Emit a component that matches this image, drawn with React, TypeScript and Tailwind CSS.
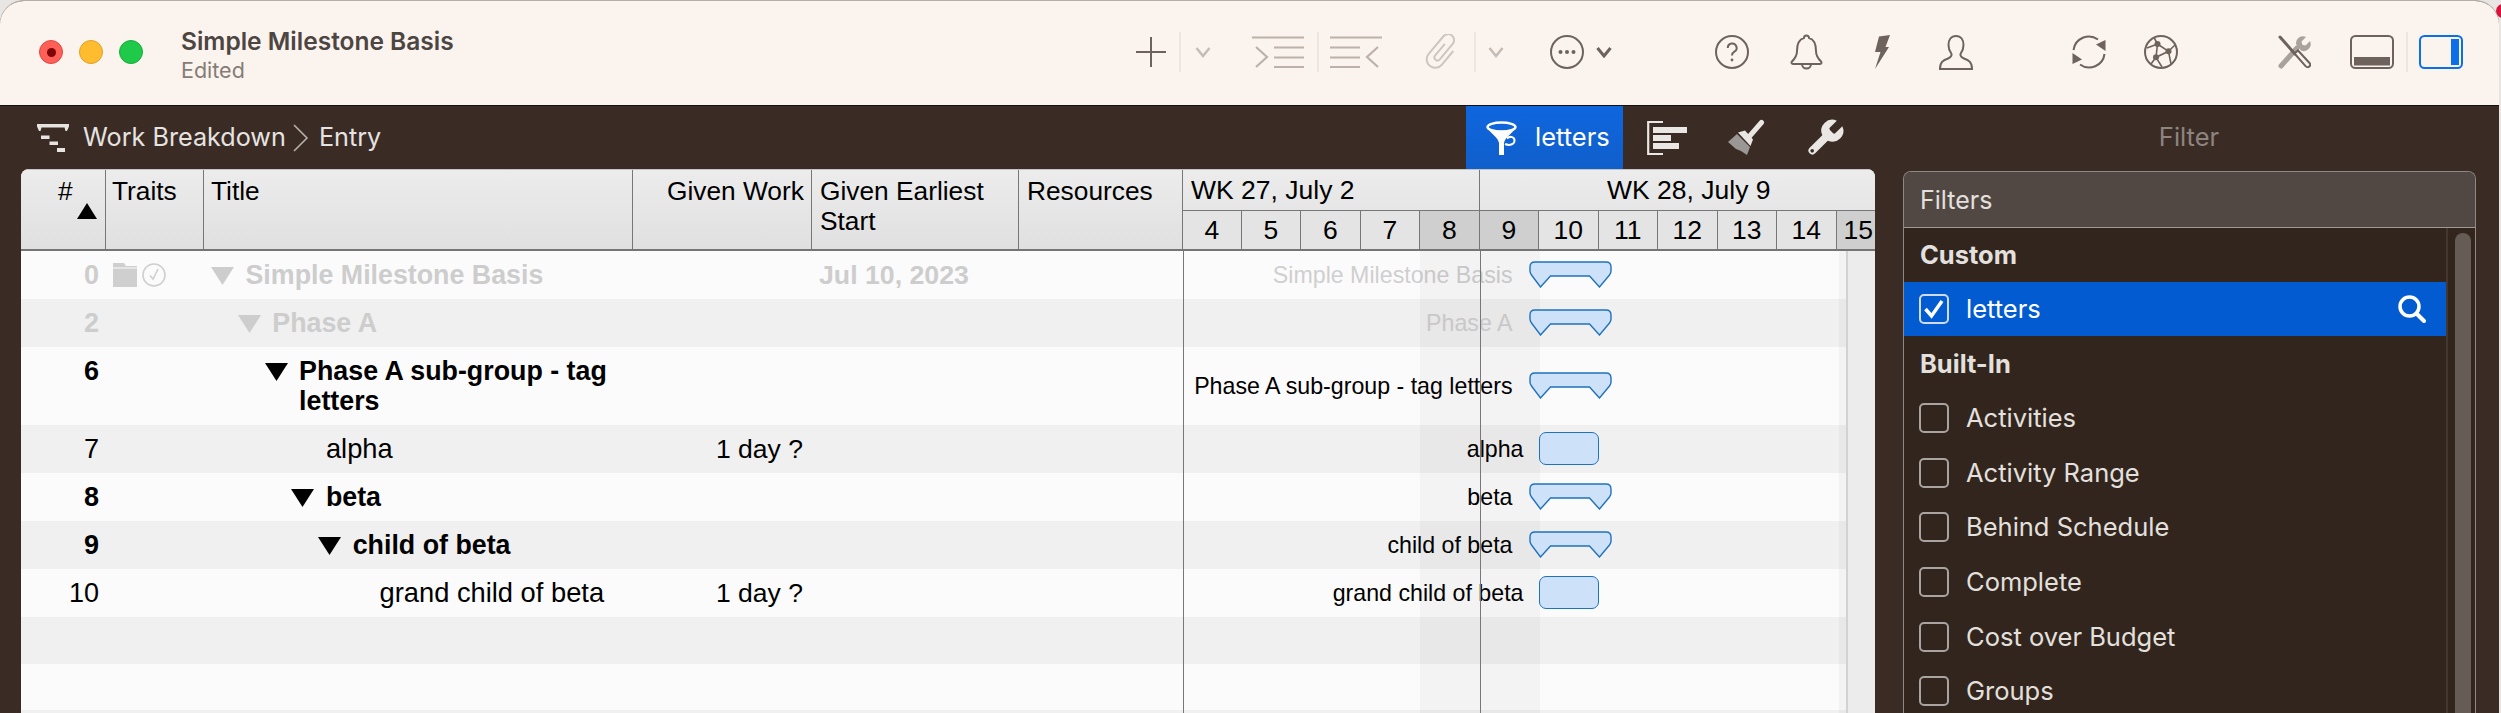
import React from "react";

const mac = "font-['Inter',sans-serif]";
const helv = "font-['Liberation_Sans',sans-serif]";

const INK = "#6e635c";
const OFF = "#bdb1a9";

function Divider() {
  return <div className="w-[2px] h-[40px] bg-[#ece6e1] shrink-0" />;
}

function Chevron({ color, width = 2.5 }: { color: string; width?: number }) {
  return (
    <svg width="16" height="12" viewBox="0 0 16 12" fill="none" stroke={color} strokeWidth={width} className="shrink-0">
      <polyline points="1.5,2 8,10 14.5,2" />
    </svg>
  );
}

function Plus() {
  return (
    <svg width="30" height="30" viewBox="0 0 30 30" stroke={INK} strokeWidth="2" className="shrink-0">
      <path d="M15 0V30M0 15H30" />
    </svg>
  );
}

function Indent({ flip }: { flip?: boolean }) {
  return (
    <svg width="52" height="32" viewBox="0 0 52 32" fill="none" stroke={OFF} strokeWidth="2.2" className="shrink-0">
      {flip ? (
        <path d="M0 1.5H52M0 11.5H30M0 21.5H30M0 31H30M48 11L37 21L48 31" />
      ) : (
        <path d="M0 1.5H52M22 11.5H52M22 21.5H52M22 31H52M4 11L15 21L4 31" />
      )}
    </svg>
  );
}

function Clip() {
  return (
    <svg width="38" height="36" viewBox="-3 -2 38 36" fill="none" stroke="#cdc5bf" strokeWidth="2" className="shrink-0">
      <g transform="rotate(40 16 16)">
        <path d="M24 8V26a8.500 8.500 0 0 1-17 0V3a6 6 0 0 1 12 0V23a3 3 0 0 1-6 0V8" />
      </g>
    </svg>
  );
}

function Dots() {
  return (
    <svg width="34" height="34" viewBox="0 0 34 34" fill={INK} className="shrink-0">
      <circle cx="17" cy="17" r="16" fill="none" stroke={INK} strokeWidth="2" />
      <circle cx="10.5" cy="17" r="2" />
      <circle cx="17" cy="17" r="2" />
      <circle cx="23.5" cy="17" r="2" />
    </svg>
  );
}

function Help() {
  return (
    <svg width="34" height="34" viewBox="0 0 34 34" fill="none" stroke={INK} strokeWidth="2" className="shrink-0">
      <circle cx="17" cy="17" r="16" />
      <path d="M12.8 13a4.4 4.4 0 1 1 6.6 3.7c-1.7 1-2.4 2-2.4 3.8" />
      <circle cx="17" cy="25" r="1.4" fill={INK} stroke="none" />
    </svg>
  );
}

function Bell() {
  return (
    <svg width="33" height="36" viewBox="0 0 33 36" fill="none" stroke={INK} strokeWidth="2" className="shrink-0">
      <path d="M16.5 1.5a2.6 2.6 0 0 0-2.6 2.6C8.5 5.5 7 10.5 7 17c0 5-2 7.5-5 10.5-1 1.2-.5 2.5 1 2.5h27c1.5 0 2-1.3 1-2.5-3-3-5-5.500-5-10.500 0-6.500-1.500-11.500-6.900-12.900a2.600 2.600 0 0 0-2.600-2.600Z" />
      <path d="M12 30a4.500 4.500 0 0 0 9 0" />
    </svg>
  );
}

function Bolt() {
  return (
    <svg width="16" height="34" viewBox="0 0 16 34" fill={INK} className="shrink-0">
      <path d="M5 1.500 16 0 11.500 12 15 12 1 34 6.500 17 1 17Z" />
    </svg>
  );
}

function Person() {
  return (
    <svg width="34" height="35" viewBox="0 0 34 35" fill="none" stroke={INK} strokeWidth="2" className="shrink-0">
      <path d="M17 1c-5 0-7.500 4-7.500 9 0 4 1.500 7 3 9 .5 2-.5 3-3.500 4.500C4 25.500 1 27 1 34h32c0-7-3-8.500-8-10.500-3-1.500-4-2.500-3.500-4.500 1.500-2 3-5 3-9 0-5-2.500-9-7.500-9Z" />
    </svg>
  );
}

function Sync() {
  return (
    <svg width="34" height="34" viewBox="0 0 34 34" fill="none" stroke={INK} strokeWidth="2" className="shrink-0">
      <path d="M1.500 15A15.500 15.500 0 0 1 26 4.500" />
      <path d="M32.500 19A15.500 15.500 0 0 1 8 29.500" />
      <path d="M33.500 16V5L24 9.500Z" fill={INK} stroke="none" />
      <path d="M.5 18V29L10 24.500Z" fill={INK} stroke="none" />
    </svg>
  );
}

function Network() {
  return (
    <svg width="34" height="34" viewBox="0 0 34 34" fill="none" stroke={INK} strokeWidth="1.6" className="shrink-0">
      <circle cx="17" cy="17" r="16" strokeWidth="2" />
      <path d="M13.500 9 24.500 16.300 12 22.300ZM13.500 9 10 2.500M13.500 9 3 13M24.500 16.300 31 10M24.500 16.300 27 29M12 22.300 7 29M12 22.300 18 32" />
      <circle cx="13.500" cy="9" r="3" fill={INK} stroke="none" />
      <circle cx="24.500" cy="16.300" r="3" fill={INK} stroke="none" />
      <circle cx="12" cy="22.300" r="3" fill={INK} stroke="none" />
    </svg>
  );
}

function Tools() {
  return (
    <svg width="33" height="34" viewBox="0 0 33 34" fill="none" className="shrink-0">
      <path d="M3 31 19 13" stroke="#a9a19b" strokeWidth="5" strokeLinecap="round" />
      <path d="M18 9a7 7 0 0 1 10-7l-4.500 4.500.8 3.200 3.200.8L32 6a7 7 0 0 1-9 9.500Z" fill="#a9a19b" />
      <path d="M2 2 17 19" stroke={INK} strokeWidth="3" strokeLinecap="round" />
      <path d="M16.500 18.500 20 15.500 31.500 28a2.400 2.400 0 0 1-3.700 3.300Z" fill="#fbf3ee" stroke={INK} strokeWidth="2" />
    </svg>
  );
}

function PanelBottom() {
  return (
    <svg width="44" height="34" viewBox="0 0 44 34" className="shrink-0">
      <rect x="1" y="1" width="42" height="32" rx="4.500" fill="none" stroke={INK} strokeWidth="2" />
      <rect x="4" y="22" width="36" height="8.500" fill={INK} />
    </svg>
  );
}

function PanelRight() {
  return (
    <svg width="44" height="34" viewBox="0 0 44 34" className="shrink-0">
      <rect x="1" y="1" width="42" height="32" rx="4.500" fill="none" stroke="#0a6fe8" strokeWidth="2" />
      <rect x="32" y="4" width="8" height="26" fill="#0a6fe8" />
    </svg>
  );
}

function Funnel() {
  return (
    <svg width="32" height="34" viewBox="0 0 32 34" className="shrink-0">
      <path d="M1.500 6C4 13 11.500 15 13 22V34H18V22C19.500 15 27 13 29.500 6Z" fill="#fff" />
      <ellipse cx="15.500" cy="6" rx="14" ry="4.500" fill="#1065da" stroke="#fff" strokeWidth="2.400" />
      <path d="M21 17.500c3-3 8-1.500 7.500 2.500-.5 3.500-5 5-9.500 3" fill="none" stroke="#fff" strokeWidth="2" />
    </svg>
  );
}

function GanttIcon() {
  return (
    <svg width="40" height="34" viewBox="0 0 40 34" fill="#e9e6e4" className="shrink-0">
      <path d="M16 1H1.200V33H16" fill="none" stroke="#e9e6e4" strokeWidth="2.200" />
      <rect x="6" y="6" width="34" height="6" />
      <rect x="6" y="14" width="18" height="6" />
      <rect x="6" y="22" width="26" height="6" />
    </svg>
  );
}

function Brush() {
  return (
    <svg width="37" height="37" viewBox="0 0 37 37" className="shrink-0">
      <path d="M0 23 9 15 22 28 19 36 13 32 8 30Z" fill="#9b9794" />
      <path d="M33.500 3.500 20 19" stroke="#e9e6e4" strokeWidth="5" strokeLinecap="round" />
      <path d="M10 13.500 17 11.500 25 20.500 22.500 27Z" fill="#e9e6e4" />
    </svg>
  );
}

function WrenchIcon() {
  return (
    <svg width="44" height="44" viewBox="0 0 24 24" className="shrink-0">
      <path
        d="M14.700 6.300a1 1 0 0 0 0 1.400l1.600 1.600a1 1 0 0 0 1.400 0l3.770-3.770a6 6 0 0 1-7.940 7.940l-6.910 6.910a2.120 2.120 0 0 1-3-3l6.910-6.910a6 6 0 0 1 7.940-7.940l-3.760 3.760z"
        fill="#e9e6e4"
      />
      <circle cx="5" cy="19" r="1" fill="#3a2c25" />
    </svg>
  );
}

function BreadcrumbIcon() {
  return (
    <svg width="33" height="28" viewBox="0 0 33 28" fill="#e6e3e1" className="shrink-0">
      <path d="M0 0H32V2.500L30 7H28.500L27.500 3.500H4.500L3.500 7H2L0 2.500Z" />
      <rect x="4" y="11.500" width="8.500" height="3.500" />
      <rect x="12.500" y="17.500" width="8.500" height="3.500" />
      <rect x="20" y="24" width="8" height="4" />
    </svg>
  );
}

function Triangle({ color }: { color: string }) {
  return (
    <svg width="23" height="18" viewBox="0 0 23 18" fill={color} className="shrink-0">
      <path d="M0 0H23L11.500 18Z" />
    </svg>
  );
}

function Traits() {
  return (
    <div className="flex items-center gap-[5px] pt-[3px]">
      <svg width="24" height="24" viewBox="0 0 24 24" fill="#cfcfcf" className="shrink-0">
        <path d="M0 0H11L13 3H24V24H0Z" />
        <rect x="0" y="4.500" width="24" height="1" fill="#fbfbfb" />
      </svg>
      <svg width="24" height="24" viewBox="0 0 24 24" fill="none" stroke="#cfcfcf" strokeWidth="1.600" className="shrink-0">
        <circle cx="12" cy="12" r="11" />
        <path d="M8 12.500 11 16 16 6" />
      </svg>
    </div>
  );
}

function GroupBar() {
  return (
    <svg width="83" height="27" viewBox="0 0 83 27" className="absolute left-[344.500px] top-0 z-10">
      <path
        d="M1 6Q1 1 6 1H77Q82 1 82 6V10Q82 12 80.500 14L70.500 26 60.500 15H21.500L11.500 26 2.500 14Q1 12 1 10Z"
        fill="#cde1f9"
        stroke="#1f72bd"
        strokeWidth="1.400"
      />
    </svg>
  );
}

type Row = {
  num?: string;
  level?: number;
  title?: string;
  work?: string;
  start?: string;
  h: number;
  bold?: boolean;
  faded?: boolean;
  label?: string;
  bar?: "group" | "task";
};

const rows: Row[] = [
  { num: "0", level: 0, title: "Simple Milestone Basis", start: "Jul 10, 2023", h: 48, bold: true, faded: true, label: "Simple Milestone Basis", bar: "group" },
  { num: "2", level: 1, title: "Phase A", h: 48, bold: true, faded: true, label: "Phase A", bar: "group" },
  { num: "6", level: 2, title: "Phase A sub-group - tag letters", h: 78, bold: true, label: "Phase A sub-group - tag letters", bar: "group" },
  { num: "7", level: 3, title: "alpha", work: "1 day ?", h: 48, label: "alpha", bar: "task" },
  { num: "8", level: 3, title: "beta", h: 48, bold: true, label: "beta", bar: "group" },
  { num: "9", level: 4, title: "child of beta", h: 48, bold: true, label: "child of beta", bar: "group" },
  { num: "10", level: 5, title: "grand child of beta", work: "1 day ?", h: 48, label: "grand child of beta", bar: "task" },
  { h: 47 },
  { h: 46 },
  { h: 12 },
];

const days = ["4", "5", "6", "7", "8", "9", "10", "11", "12", "13", "14"];
const filters = ["Activities", "Activity Range", "Behind Schedule", "Complete", "Cost over Budget", "Groups"];

function TableRow({ row, index }: { row: Row; index: number }) {
  const tone = row.faded ? "text-[#cdcdcd]" : "text-black";
  const weight = row.bold ? "font-bold" : "font-normal";
  const barTop = Math.round((row.h - 26) / 2) - 1;
  return (
    <div className={`flex shrink-0 ${index % 2 === 0 ? "bg-[#fbfbfb]" : "bg-[#f0f0f0]"}`} style={{ height: row.h }}>
      <div className={`w-[85px] shrink-0 pr-[7px] pt-[9px] text-right text-[27px] leading-[30px] ${tone} ${weight}`}>{row.num}</div>
      <div className="w-[98px] shrink-0 pl-[7px] pt-[9px]">{row.num === "0" && <Traits />}</div>
      <div className="w-[429px] shrink-0 pt-[9px]" style={{ paddingLeft: 7 + 26.8 * (row.level ?? 0) }}>
        {row.title && (
          <div className="flex">
            <div className="w-[34.500px] shrink-0 pt-[7px]">{row.bold && <Triangle color={row.faded ? "#cdcdcd" : "#000"} />}</div>
            <div className={`leading-[30px] ${tone} ${weight} ${row.bold ? "text-[26.800px]" : "text-[27.300px]"}`}>{row.title}</div>
          </div>
        )}
      </div>
      <div className="w-[179px] shrink-0 pl-[83px] pt-[9px] text-[26.500px] leading-[30px] text-black">{row.work}</div>
      <div className={`w-[207px] shrink-0 pl-[7px] pt-[9px] text-[26.700px] leading-[30px] font-bold ${tone}`}>{row.start}</div>
      <div className="w-[165px] shrink-0" />
      <div className="relative flex-1">
        {row.label && (
          <div
            className={`absolute top-0 bottom-0 flex items-center justify-end text-[23.200px] ${row.faded ? "text-[#cfcfcf]" : "text-black"}`}
            style={{ right: row.bar === "task" ? 322.500 : 333.500 }}
          >
            <span className="whitespace-nowrap">{row.label}</span>
          </div>
        )}
        {row.bar === "group" && (
          <div className="absolute left-0 right-0" style={{ top: barTop }}>
            <GroupBar />
          </div>
        )}
        {row.bar === "task" && (
          <div className="absolute left-[355px] top-[7px] z-10 w-[60px] h-[33px] rounded-[7px] border border-[#1f72bd] bg-[#cde1f9]" />
        )}
      </div>
    </div>
  );
}

export default function App() {
  return (
    <div className={`relative w-[2501px] h-[713px] overflow-hidden bg-[#e9e5e2] ${helv}`}>
      <div className="absolute left-[2496px] top-[4px] w-[14px] h-[14px] rounded-full bg-[#d8143c]" />
      <div className="relative flex flex-col w-[2499px] h-[713px] rounded-t-[24px] overflow-hidden border-t border-[#b4aea9] bg-[#3a2c25]">
        {/* title bar */}
        <div className="flex items-center h-[105px] shrink-0 pb-[2px] bg-[#fbf3ee] border-b border-[#15100d]">
          <div className={`flex items-center w-[1135.500px] shrink-0 pl-[39px] ${mac}`}>
            <div className="flex items-center justify-center w-[24px] h-[24px] rounded-full bg-[#fe5f57] border border-[#e2463f]">
              <div className="w-[9px] h-[9px] rounded-full bg-[#7e0508]" />
            </div>
            <div className="w-[24px] h-[24px] ml-[16px] rounded-full bg-[#febc2e] border border-[#e0a028]" />
            <div className="w-[24px] h-[24px] ml-[16px] rounded-full bg-[#1fc94a] border border-[#1aab3c]" />
            <div className="ml-[38px] pt-[5px]">
              <div className="text-[24.500px] leading-[30px] font-semibold text-[#4c4542] whitespace-nowrap">Simple Milestone Basis</div>
              <div className="text-[21.500px] leading-[28px] text-[#857c76]">Edited</div>
            </div>
          </div>
          <Plus />
          <div className="ml-[13.500px]"><Divider /></div>
          <div className="ml-[14px]"><Chevron color="#c5bcb5" /></div>
          <div className="ml-[41px]"><Indent /></div>
          <div className="ml-[13px]"><Divider /></div>
          <div className="ml-[11px]"><Indent flip /></div>
          <div className="ml-[41px]"><Clip /></div>
          <div className="ml-[13px]"><Divider /></div>
          <div className="ml-[12px]"><Chevron color="#c5bcb5" /></div>
          <div className="ml-[46px]"><Dots /></div>
          <div className="ml-[12px]"><Chevron color={INK} width={3} /></div>
          <div className="ml-[103px]"><Help /></div>
          <div className="ml-[41px]"><Bell /></div>
          <div className="ml-[51px]"><Bolt /></div>
          <div className="ml-[49px]"><Person /></div>
          <div className="ml-[99px]"><Sync /></div>
          <div className="ml-[38px]"><Network /></div>
          <div className="ml-[100px]"><Tools /></div>
          <div className="ml-[39px]"><PanelBottom /></div>
          <div className="ml-[12px]"><Divider /></div>
          <div className="ml-[11px]"><PanelRight /></div>
        </div>

        {/* sub bar */}
        <div className={`flex h-[63px] shrink-0 ${mac}`}>
          <div className="flex items-center w-[1466px] shrink-0 pl-[37px] text-[25.200px] text-[#e6e3e1]">
            <BreadcrumbIcon />
            <span className="ml-[13px]">Work Breakdown</span>
            <svg width="16" height="28" viewBox="0 0 16 28" fill="none" stroke="#b9b4b0" strokeWidth="1.500" className="ml-[7px]">
              <path d="M1 1 14 14 1 27" />
            </svg>
            <span className="ml-[10px]">Entry</span>
          </div>
          <div className="flex items-center w-[157px] shrink-0 pl-[20px] bg-gradient-to-b from-[#0e66de] to-[#105fcb]">
            <Funnel />
            <span className="ml-[17px] text-[25.500px] text-white">letters</span>
          </div>
          <div className="flex items-center w-[280px] shrink-0 pl-[24px]">
            <GanttIcon />
            <div className="ml-[41px]"><Brush /></div>
            <div className="ml-[38px]"><WrenchIcon /></div>
          </div>
          <div className="flex items-center justify-center w-[572px] shrink-0 text-[25.500px] text-[#8d8480]">Filter</div>
        </div>

        {/* content */}
        <div className="flex flex-1 min-h-0 pl-[21px]">
          {/* table */}
          <div className="flex flex-col w-[1854px] shrink-0 rounded-t-[8px] overflow-hidden bg-[#fbfbfb]">
            <div className="flex h-[82px] shrink-0 text-[26.300px] leading-[30px] text-black border-t border-[#c4c4c4] border-b-2 border-b-[#757575] bg-gradient-to-b from-[#ececec] to-[#e0e0e0]">
              <div className="w-[85px] shrink-0 pt-[6px] border-r border-[#777]">
                <div className="pl-[37px]">#</div>
                <svg width="20" height="16" viewBox="0 0 20 16" className="ml-[56px] -mt-[3px]">
                  <path d="M10 0 20 16H0Z" />
                </svg>
              </div>
              <div className="w-[98px] shrink-0 pt-[6px] pl-[6px] border-r border-[#777]">Traits</div>
              <div className="w-[429px] shrink-0 pt-[6px] pl-[7px] border-r border-[#777]">Title</div>
              <div className="w-[179px] shrink-0 pt-[6px] pl-[34px] border-r border-[#777] whitespace-nowrap">Given Work</div>
              <div className="w-[207px] shrink-0 pt-[6px] pl-[8px] border-r border-[#777]">Given Earliest<br />Start</div>
              <div className="w-[164px] shrink-0 pt-[6px] pl-[8px] border-r border-[#777]">Resources</div>
              <div className="flex flex-col flex-1 min-w-0">
                <div className="flex h-[41px] shrink-0 border-b border-[#777] text-[26.500px]">
                  <div className="w-[297px] shrink-0 pt-[5px] pl-[8px] border-r border-[#777]">WK 27, July 2</div>
                  <div className="pt-[5px] pl-[127px] whitespace-nowrap">WK 28, July 9</div>
                </div>
                <div className="flex flex-1 text-[26.500px] leading-[38px]">
                  {days.map((d, i) => (
                    <div
                      key={d}
                      className={`flex items-center justify-center shrink-0 border-r border-[#777] ${i === 0 ? "w-[58.500px]" : "w-[59.500px]"} ${d === "8" || d === "9" ? "bg-[#cfcfcf]" : "bg-[#e4e4e4]"}`}
                    >
                      {d}
                    </div>
                  ))}
                  <div className="flex items-center flex-1 pl-[7px] overflow-hidden bg-[#cfcfcf]">15</div>
                </div>
              </div>
            </div>
            <div className="relative flex flex-1 min-h-0">
              <div className="flex flex-col w-[1825px] shrink-0">
                {rows.map((r, i) => (
                  <TableRow key={i} row={r} index={i} />
                ))}
              </div>
              <div className="flex-1 bg-[#ececec] border-l-2 border-[#d2d2d2]" />
              <div className="absolute top-0 bottom-0 left-[1399px] w-[120px] bg-black/[0.03]" />
              <div className="absolute top-0 bottom-0 left-[1817.500px] w-[7.500px] bg-black/[0.03]" />
              <div className="absolute top-0 bottom-0 left-[1162px] w-px bg-[#777]" />
              <div className="absolute top-0 bottom-0 left-[1459px] w-px bg-[#777]" />
            </div>
          </div>

          {/* filter panel */}
          <div className={`flex flex-col w-[573px] ml-[28px] mt-[2px] shrink-0 rounded-t-[8px] overflow-hidden border border-[#8f8884] border-b-0 ${mac}`}>
            <div className="flex items-center h-[56px] shrink-0 pl-[16px] pt-[2px] text-[25px] text-[#e3e0de] bg-[#524843] border-b border-[#a09a96]">Filters</div>
            <div className="flex flex-1 min-h-0 bg-[#32251e]">
              <div className="flex-1 min-w-0 text-[25.500px] text-[#e3e0de]">
                <div className="flex items-center h-[54px] pl-[16px] pt-[1px] font-bold">Custom</div>
                <div className="flex items-center h-[54px] pl-[15px] pr-[20px] bg-[#025bd0] text-white">
                  <div className="flex items-center justify-center w-[30px] h-[30px] rounded-[5px] border-2 border-[#cfdcf0]">
                    <svg width="22" height="20" viewBox="0 0 22 20" fill="none" stroke="#fff" strokeWidth="3.500">
                      <path d="M2.500 10 8.500 17 19 2" />
                    </svg>
                  </div>
                  <span className="ml-[17px]">letters</span>
                  <svg width="28" height="28" viewBox="0 0 28 28" fill="none" stroke="#fff" className="ml-auto">
                    <circle cx="11.500" cy="11.500" r="9.500" strokeWidth="3.500" />
                    <path d="M18.500 18.500 26 26" strokeWidth="4" strokeLinecap="round" />
                  </svg>
                </div>
                <div className="flex items-center h-[55px] pl-[16px] pt-[2px] font-bold">Built-In</div>
                {filters.map((f) => (
                  <div key={f} className="flex items-center h-[54.600px] pl-[15px]">
                    <div className="w-[30px] h-[30px] shrink-0 rounded-[5px] border-2 border-[#a9a4a1]" />
                    <span className="ml-[17px]">{f}</span>
                  </div>
                ))}
              </div>
              <div className="w-[29px] shrink-0 pl-[7px] pt-[5px] border-l-2 border-[#43372f]">
                <div className="w-[16px] h-[600px] rounded-full bg-[#665b55]" />
              </div>
            </div>
          </div>
        </div>
      </div>
    </div>
  );
}
